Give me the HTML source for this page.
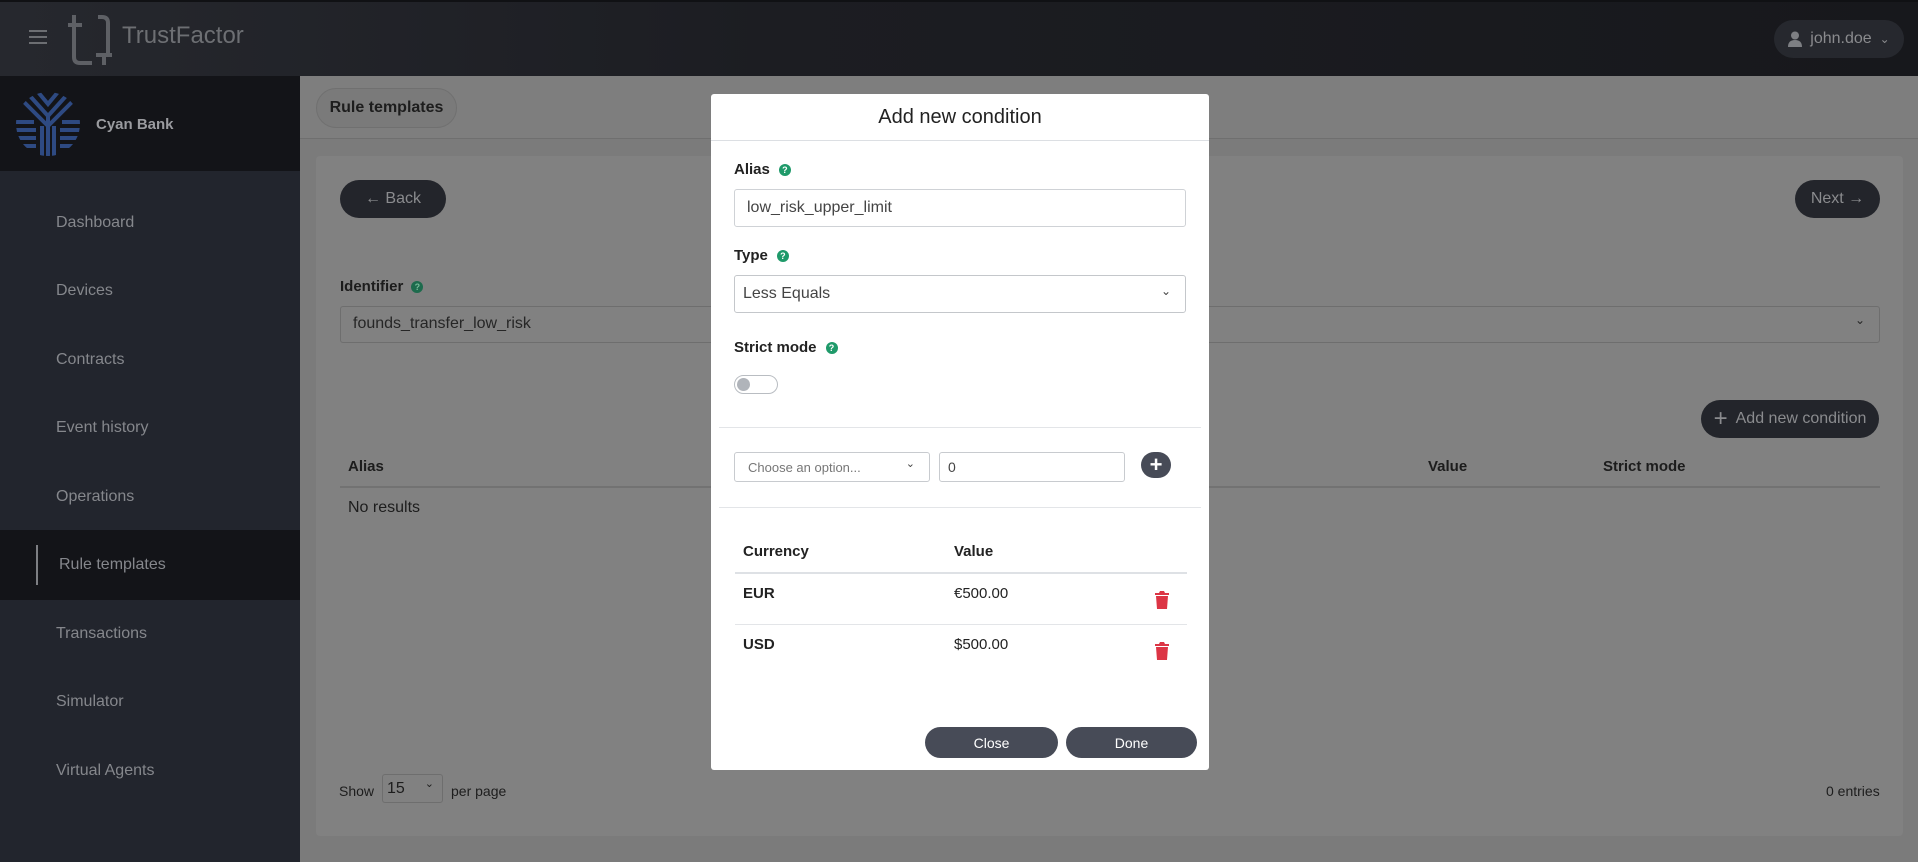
<!DOCTYPE html>
<html><head><meta charset="utf-8"><style>
*{box-sizing:border-box;margin:0;padding:0}
body{width:1918px;height:862px;overflow:hidden;font-family:"Liberation Sans",sans-serif;background:#7b7b7b;position:relative}
.a{position:absolute}
.top{left:0;top:0;width:1918px;height:76px;background:linear-gradient(90deg,#26282e,#1c1d22 40%,#17181c);border-top:2px solid #101114}
.side{left:0;top:76px;width:300px;height:786px;background:#22252d}
.brand{left:0;top:76px;width:300px;height:95px;background:#131418}
.nav{left:56px;color:#85878c;font-size:16px;transform:translateY(-50%)}
.card{left:316px;top:156px;width:1587px;height:680px;background:#818181;border-radius:4px}
.dbtn{background:#23252b;color:#8a8b8e;border-radius:20px;font-size:16px;display:flex;align-items:center;justify-content:center;gap:8px}
.lbl{font-weight:bold;font-size:15px;color:#1c1c1c}
.q{display:inline-block;width:12px;height:12px;border-radius:50%;background:#1d6b4d;color:#7b9;font-size:9px;text-align:center;line-height:12px;vertical-align:1px;margin-left:8px}
.modal{left:711px;top:94px;width:498px;height:676px;background:#fff;border-radius:3px}
.m{position:absolute}
.inp{border:1px solid #cfd2d6;border-radius:3px;background:#fff;color:#444;font-size:16px;display:flex;align-items:center}
.ml{font-weight:bold;font-size:15px;color:#222}
.mq{display:inline-block;width:12px;height:12px;border-radius:50%;background:#1f9a6a;color:#fff;font-size:9px;text-align:center;line-height:12px;font-weight:bold;vertical-align:1px;margin-left:9px}
.hr{height:1px;background:#e3e5e8}
.btn{background:#474b57;color:#fff;font-size:14px;border-radius:16px;display:flex;align-items:center;justify-content:center}
</style></head><body>
<div class="a top"></div>
<div class="a" style="left:29px;top:30px;width:18px;height:14px;border-top:2px solid #6c6e72;border-bottom:2px solid #6c6e72"><div style="margin-top:4px;height:2px;background:#6c6e72"></div></div>
<svg class="a" style="left:66px;top:13px" width="48" height="52" viewBox="0 0 48 52"><path d="M8 2v42q0 6 6 6h12M2 12h14M32 4h4q6 0 6 6v30M30 42h16M38 42v10" fill="none" stroke="#5e6065" stroke-width="4"/></svg>
<div class="a" style="left:122px;top:22px;font-size:24px;color:#6d6f73">TrustFactor</div>
<div class="a dbtn" style="left:1774px;top:20px;width:130px;height:38px;background:#26282e;color:#8a8b8e;font-size:16px">
<svg width="14" height="16" viewBox="0 0 14 16"><circle cx="7" cy="4.5" r="4" fill="#7d7f83"/><path d="M0 16q0-7 7-7t7 7z" fill="#7d7f83"/></svg>john.doe <span style="font-size:12px">&#8964;</span></div>
<div class="a side"></div>
<div class="a brand"></div>
<svg class="a" style="left:16px;top:92px" width="64" height="64" viewBox="0 0 64 64"><clipPath id="c"><circle cx="32" cy="32" r="32"/></clipPath><g clip-path="url(#c)" stroke="#2e4a82" stroke-width="4" fill="none"><path d="M22 0l10 12 10-12M14 4l18 20 18-20M6 8l26 26 26-26M32 24v40M26 34v30M38 34v30M0 30h18M0 38h20M0 46h20M0 54h20M46 30h18M44 38h20M44 46h20M44 54h20"/></g></svg>
<div class="a" style="left:96px;top:116px;color:#9a9b9f;font-size:15px;font-weight:bold">Cyan Bank</div>
<div class="a nav" style="top:223px">Dashboard</div>
<div class="a nav" style="top:291px">Devices</div>
<div class="a nav" style="top:360px">Contracts</div>
<div class="a nav" style="top:428px">Event history</div>
<div class="a nav" style="top:497px">Operations</div>
<div class="a" style="left:0;top:530px;width:300px;height:70px;background:#131418"></div>
<div class="a" style="left:36px;top:545px;width:2px;height:40px;background:#7d7f83"></div>
<div class="a nav" style="top:565px;left:59px">Rule templates</div>
<div class="a nav" style="top:634px">Transactions</div>
<div class="a nav" style="top:702px">Simulator</div>
<div class="a nav" style="top:771px">Virtual Agents</div>
<div class="a" style="left:300px;top:76px;width:1618px;height:63px;background:#7e7e7e;border-bottom:1px solid #6f6f6f"></div>
<div class="a" style="left:316px;top:88px;width:141px;height:40px;border:1px solid #707070;border-radius:20px;background:#7a7a7a;font-weight:bold;font-size:16px;color:#1d1d1d;display:flex;align-items:center;justify-content:center">Rule templates</div>
<div class="a card"></div>
<div class="a dbtn" style="left:340px;top:180px;width:106px;height:38px">&#8592; Back</div>
<div class="a dbtn" style="left:1795px;top:180px;width:85px;height:38px">Next &#8594;</div>
<div class="a lbl" style="left:340px;top:278px">Identifier<span class="q">?</span></div>
<div class="a" style="left:340px;top:306px;width:1540px;height:37px;border:1px solid #6e6e6e;border-radius:3px;font-size:16px;color:#262626;padding:8px 12px">founds_transfer_low_risk<span style="position:absolute;right:14px;top:6px;font-size:12px">&#8964;</span></div>
<div class="a dbtn" style="left:1701px;top:400px;width:178px;height:38px"><span style="font-size:24px;font-weight:300">+</span>Add new condition</div>
<div class="a lbl" style="left:348px;top:458px">Alias</div>
<div class="a lbl" style="left:1428px;top:458px">Value</div>
<div class="a lbl" style="left:1603px;top:458px">Strict mode</div>
<div class="a" style="left:340px;top:486px;width:1540px;height:2px;background:#727272"></div>
<div class="a" style="left:348px;top:499px;font-size:16px;color:#1d1d1d">No results</div>
<div class="a" style="left:339px;top:783px;font-size:14px;color:#1d1d1d">Show</div>
<div class="a" style="left:382px;top:774px;width:61px;height:29px;border:1px solid #6e6e6e;border-radius:3px;font-size:16px;color:#1d1d1d;padding:5px 4px">15<span style="position:absolute;right:8px;top:2px;font-size:11px">&#8964;</span></div>
<div class="a" style="left:451px;top:783px;font-size:14px;color:#1d1d1d">per page</div>
<div class="a" style="left:1826px;top:783px;font-size:14px;color:#1d1d1d">0 entries</div>

<div class="a modal">
<div class="m" style="left:0;top:12px;width:498px;text-align:center;font-size:20px;color:#222">Add new condition</div>
<div class="m hr" style="left:0;top:46px;width:498px;background:#dcdfe3"></div>
<div class="m ml" style="left:23px;top:67px">Alias<span class="mq">?</span></div>
<div class="m inp" style="left:23px;top:95px;width:452px;height:38px;padding-left:12px">low_risk_upper_limit</div>
<div class="m ml" style="left:23px;top:153px">Type<span class="mq">?</span></div>
<div class="m inp" style="left:23px;top:181px;width:452px;height:38px;padding-left:8px;border-color:#c4c7cb">Less Equals<span style="position:absolute;right:14px;top:8px;font-size:12px">&#8964;</span></div>
<div class="m ml" style="left:23px;top:245px">Strict mode<span class="mq">?</span></div>
<div class="m" style="left:23px;top:281px;width:44px;height:19px;border:1px solid #b9bdc2;border-radius:10px"><div style="position:absolute;left:2px;top:2px;width:13px;height:13px;border-radius:50%;background:#b0b4ba"></div></div>
<div class="m hr" style="left:8px;top:333px;width:482px"></div>
<div class="m inp" style="left:23px;top:358px;width:196px;height:30px;font-size:13px;color:#777;padding-left:13px;border-color:#c8cbcf">Choose an option...<span style="position:absolute;right:14px;top:4px;font-size:11px;color:#444">&#8964;</span></div>
<div class="m inp" style="left:228px;top:358px;width:186px;height:30px;font-size:14px;padding-left:8px;border-color:#c8cbcf">0</div>
<div class="m" style="left:430px;top:358px;width:30px;height:26px;border-radius:13px;background:#474b57;color:#fff;font-size:22px;line-height:26px;text-align:center;font-weight:bold">+</div>
<div class="m hr" style="left:8px;top:413px;width:482px"></div>
<div class="m ml" style="left:32px;top:449px">Currency</div>
<div class="m ml" style="left:243px;top:449px">Value</div>
<div class="m" style="left:24px;top:478px;width:452px;height:2px;background:#dee1e5"></div>
<div class="m ml" style="left:32px;top:491px">EUR</div>
<div class="m" style="left:243px;top:491px;font-size:15px;color:#222">€500.00</div>
<div class="m hr" style="left:24px;top:530px;width:452px"></div>
<div class="m ml" style="left:32px;top:542px">USD</div>
<div class="m" style="left:243px;top:542px;font-size:15px;color:#222">$500.00</div>
<svg class="m" style="left:443px;top:497px" width="16" height="18" viewBox="0 0 16 18"><path d="M1 2h4l1-2h4l1 2h4v2H1zM2 5h12l-1 13H3z" fill="#dc3545"/></svg>
<svg class="m" style="left:443px;top:548px" width="16" height="18" viewBox="0 0 16 18"><path d="M1 2h4l1-2h4l1 2h4v2H1zM2 5h12l-1 13H3z" fill="#dc3545"/></svg>
<div class="m btn" style="left:214px;top:633px;width:133px;height:31px">Close</div>
<div class="m btn" style="left:355px;top:633px;width:131px;height:31px">Done</div>
</div>
</body></html>
